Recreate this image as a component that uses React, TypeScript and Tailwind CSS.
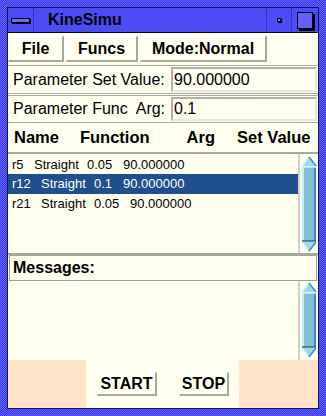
import React from "react";

function ScrollBar({ h }: { h: number }) {
  const a = 11;
  return (
    <svg width="16" height={h} viewBox={`0 0 16 ${h}`}>
      <polygon points={`1,${a} 15,${a} 15,${h - a} 1,${h - a}`} fill="#80c0d6" />
      <line x1="2" y1={a} x2="2" y2={h - a} stroke="#c0f0fc" strokeWidth="2" />
      <line x1="14" y1={a} x2="14" y2={h - a} stroke="#4a8aa2" strokeWidth="2" />
      <polygon points={`8,1 15,${a - 1} 1,${a - 1}`} fill="#9fd8ea" />
      <polyline points={`1,${a - 1} 8,1`} fill="none" stroke="#c8f4ff" strokeWidth="1.5" />
      <polyline points={`8,1 15,${a - 1}`} fill="none" stroke="#4a8aa2" strokeWidth="1.5" />
      <line x1="1" y1={a} x2="15" y2={a} stroke="#c8f4ff" strokeWidth="1.5" />
      <polygon points={`1,${h - a + 1} 15,${h - a + 1} 8,${h - 1}`} fill="#9fd8ea" />
      <polyline points={`1,${h - a + 1} 8,${h - 1}`} fill="none" stroke="#c8f4ff" strokeWidth="1.5" />
      <polyline points={`8,${h - 1} 15,${h - a + 1}`} fill="none" stroke="#4a8aa2" strokeWidth="1.5" />
      <line x1="1" y1={h - a} x2="15" y2={h - a} stroke="#2f6a80" strokeWidth="1.5" />
    </svg>
  );
}

const dither =
  "bg-[#4848f0] bg-[repeating-conic-gradient(#3030e6_0_25%,#6a6aff_0_50%)] bg-[length:2px_2px]";

export default function App() {
  return (
    <div
      className={`w-[326px] h-[416px] p-[7px] ${dither}`}
      style={{ fontFamily: '"Liberation Sans", Arial, sans-serif' }}
    >
      <div className="w-full h-full border border-[#101060] flex flex-col bg-[#fffff0]">
        {/* Title bar */}
        <div className="h-[25px] flex bg-[#4c4cf4] border-b border-black shrink-0">
          <div className="w-[26px] flex items-center justify-center border-r border-dotted border-[#2020a0]">
            <div className="w-[19px] h-[5px] border border-black bg-[#6a6aff] shadow-[1px_1px_0_#000]" />
          </div>
          <div className="flex-1 flex items-center pl-[14px] text-[16px] font-bold text-black">
            KineSimu
          </div>
          <div className="w-[26px] flex items-center justify-center border-l border-r border-dotted border-[#2020a0]">
            <div className="w-[4px] h-[4px] border border-black bg-[#6a6aff] shadow-[1px_1px_0_#000]" />
          </div>
          <div className="w-[26px] flex items-center justify-center">
            <div className="w-[16px] h-[17px] border border-black bg-[#6060f8] shadow-[2px_2px_0_#000]" />
          </div>
        </div>

        {/* Menu bar */}
        <div className="h-[32px] pt-[3px] flex gap-[2px] shrink-0 text-[16px] font-bold text-black">
          <div className="w-[56px] h-[26px] flex items-center justify-center border-l border-t border-white border-r-2 border-b-2 border-r-[#a8a898] border-b-[#a8a898]">
            File
          </div>
          <div className="w-[72px] h-[26px] flex items-center justify-center border-l border-t border-white border-r-2 border-b-2 border-r-[#a8a898] border-b-[#a8a898]">
            Funcs
          </div>
          <div className="w-[127px] h-[26px] flex items-center justify-center border-l border-t border-white border-r-2 border-b-2 border-r-[#a8a898] border-b-[#a8a898]">
            Mode:Normal
          </div>
        </div>

        {/* Param row 1 */}
        <div className="h-[29px] flex items-center border-y border-[#a8a8a0] shrink-0 text-[16px] text-black">
          <span className="pl-[5px]">Parameter Set Value:</span>
          <div className="ml-auto mr-[1px] w-[146px] h-[25px] border-2 border-[#b0b0a8] border-r-[#e8e8e0] border-b-[#e8e8e0] flex items-center pl-[1px]">
            90.000000
          </div>
        </div>

        {/* Param row 2 */}
        <div className="mt-[1px] h-[28px] flex items-center border-y border-[#a8a8a0] shrink-0 text-[16px] text-black">
          <span className="pl-[5px] whitespace-pre">Parameter Func  Arg:</span>
          <div className="ml-auto mr-[1px] w-[146px] h-[24px] border-2 border-[#b0b0a8] border-r-[#e8e8e0] border-b-[#e8e8e0] flex items-center pl-[1px]">
            0.1
          </div>
        </div>

        {/* Header */}
        <div className="h-[29px] flex items-center shrink-0 text-[16.5px] font-bold text-black">
          <span className="ml-[6px]">Name</span>
          <span className="ml-[21px]">Function</span>
          <span className="ml-[37px]">Arg</span>
          <span className="ml-[22px]">Set Value</span>
        </div>

        {/* List */}
        <div className="h-[103px] flex border-t-2 border-b-2 border-[#a8a8a0] shrink-0">
          <div className="flex-1 pt-[1px] text-[13px] text-black">
            <div className="h-[19px] flex items-center">
              <span className="ml-[4px] w-[22px]">r5</span>
              <span className="w-[53px]">Straight</span>
              <span className="w-[36px]">0.05</span>
              <span>90.000000</span>
            </div>
            <div className="h-[20px] flex items-center bg-[#1f4f8c] text-white">
              <span className="ml-[4px] w-[29px]">r12</span>
              <span className="w-[53px]">Straight</span>
              <span className="w-[29px]">0.1</span>
              <span>90.000000</span>
            </div>
            <div className="h-[20px] flex items-center">
              <span className="ml-[4px] w-[29px]">r21</span>
              <span className="w-[53px]">Straight</span>
              <span className="w-[36px]">0.05</span>
              <span>90.000000</span>
            </div>
          </div>
          <div className="w-[20px] border-l-2 border-[#d0d0c8] flex items-center justify-center">
            <ScrollBar h={96} />
          </div>
        </div>

        {/* Messages label */}
        <div className="h-[26px] mx-[1px] flex items-center border border-[#a0a0a0] shrink-0 text-[16px] font-bold text-black">
          <span className="pl-[3px]">Messages:</span>
        </div>

        {/* Messages area */}
        <div className="h-[79px] flex shrink-0">
          <div className="flex-1" />
          <div className="w-[20px] border-l-2 border-[#d0d0c8] flex items-start justify-center pt-[1px]">
            <ScrollBar h={76} />
          </div>
        </div>

        {/* Bottom */}
        <div className="flex-1 flex">
          <div className="w-[78px] bg-[#ffe4c8]" />
          <div className="flex-1 flex items-start pt-[12px] text-[16px] font-bold text-black">
            <div className="ml-[11px] w-[60px] h-[24px] flex items-center justify-center border-l border-t border-white border-r-2 border-b-2 border-r-[#a8a898] border-b-[#a8a898]">
              START
            </div>
            <div className="ml-[22px] w-[50px] h-[24px] flex items-center justify-center border-l border-t border-white border-r-2 border-b-2 border-r-[#a8a898] border-b-[#a8a898]">
              STOP
            </div>
          </div>
          <div className="w-[79px] bg-[#ffe4c8]" />
        </div>
      </div>
    </div>
  );
}
